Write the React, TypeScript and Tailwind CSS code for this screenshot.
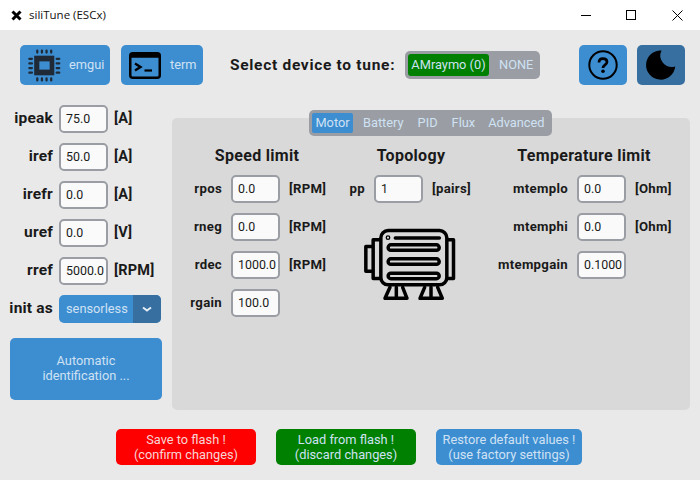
const font = { fontFamily: 'Roboto, sans-serif' };

function Input({ value }: { value: string }) {
  return (
    <div className="w-[49px] h-[28px] shrink-0 rounded-[5px] border-2 border-[#9a9da3] bg-[#fafafa] pl-[5px] flex items-center overflow-hidden text-[12.4px] text-[#1a1a1a] whitespace-nowrap">
      {value}
    </div>
  );
}

function SideField({ label, value, unit }: { label: string; value: string; unit: string }) {
  return (
    <div className="flex items-center h-[28px] mb-[10px]">
      <div className="w-[53px] text-right text-[15.5px] font-bold text-[#1a1a1a] tracking-[0.2px]">{label}</div>
      <div className="ml-[6px]"><Input value={value} /></div>
      <div className="ml-[6px] text-[14.5px] font-bold text-[#1a1a1a] tracking-[0.2px]">{unit}</div>
    </div>
  );
}

function Field({ label, value, unit, labelWidth }: { label: string; value: string; unit?: string; labelWidth: string }) {
  return (
    <div className="flex items-center h-[28px] mb-[10px]">
      <div className={`${labelWidth} shrink-0 text-right text-[13.2px] font-bold text-[#1a1a1a] tracking-[0.3px] whitespace-nowrap`}>{label}</div>
      <div className="ml-[9px]"><Input value={value} /></div>
      {unit && <div className="ml-[9px] text-[13.2px] font-bold text-[#1a1a1a] tracking-[0.3px] whitespace-nowrap">{unit}</div>}
    </div>
  );
}

function ChipIcon() {
  return (
    <svg width="33" height="33" viewBox="0 0 32 32" fill="none">
      <rect x="6" y="6.500" width="19.500" height="19" fill="#1f2a36" />
      <rect x="11" y="12" width="10" height="8" fill="#3d8dd1" />
      <g stroke="#1f2a36" strokeWidth="2.200" strokeLinecap="round">
        <path d="M9 1.500v2M13.500 1.500v2M18 1.500v2M22.500 1.500v2" />
        <path d="M9 28.500v2M13.500 28.500v2M18 28.500v2M22.500 28.500v2" />
        <path d="M1.300 9.500h2.500M1.300 14h2.500M1.300 18.500h2.500M1.300 23h2.500" />
        <path d="M27.800 9.500h2.500M27.800 14h2.500M27.800 18.500h2.500M27.800 23h2.500" />
      </g>
    </svg>
  );
}

function TermIcon() {
  return (
    <svg width="32" height="27" viewBox="0 0 32 27" fill="none">
      <rect x="1.250" y="1.250" width="29.500" height="24.500" rx="2.500" stroke="#000" strokeWidth="2.500" />
      <rect x="1.250" y="1.250" width="29.500" height="4.500" fill="#000" />
      <path d="M6 11.500l5.500 3.500-5.500 3.500" stroke="#000" strokeWidth="2.400" />
      <path d="M15.500 18.500h7.500" stroke="#000" strokeWidth="2.200" />
    </svg>
  );
}

function HelpIcon() {
  return (
    <svg width="32" height="32" viewBox="0 0 32 32" fill="none">
      <circle cx="16" cy="16" r="13.700" stroke="#000" strokeWidth="2" />
      <path d="M12 13.500c0-2.400 1.700-3.800 4-3.800 2.400 0 4 1.400 4 3.300 0 2.900-4 2.900-4 6" stroke="#000" strokeWidth="2.700" />
      <circle cx="16" cy="22.300" r="1.800" fill="#000" />
    </svg>
  );
}

function MoonIcon() {
  return (
    <svg width="32" height="32" viewBox="0 0 32 32">
      <path d="M16.500 1.500A14.600 14.600 0 1 0 30.200 17.500A11.500 11.500 0 0 1 16.500 1.500Z" fill="#000" />
    </svg>
  );
}

function MotorIcon() {
  return (
    <svg width="100" height="80" viewBox="0 0 300 240" fill="none" stroke="#000" strokeWidth="10.500" strokeLinejoin="round" strokeLinecap="round">
      <rect x="62.500" y="16.500" width="198" height="163" rx="22" />
      <path d="M58 44.500H39.500V160.500H58" />
      <path d="M35 64.500H17.500V138.500H35" />
      <path d="M265 44.500H280.500V160.500H265" />
      <rect x="84.500" y="59.500" width="153" height="16.500" rx="8" />
      <rect x="84.500" y="101.500" width="153" height="16.500" rx="8" />
      <rect x="84.500" y="144.500" width="153" height="16.500" rx="8" />
      <path d="M106 39H238" />
      <circle cx="84" cy="38" r="2" />
      <path d="M90 187L75 220H141L128 187M109 187V220" />
      <path d="M194 187L180 220H247L233 187M213 187V220" />
    </svg>
  );
}

export default function App() {
  return (
    <div className="w-[700px] h-[480px] bg-[#e9e9e9] overflow-hidden flex flex-col" style={font}>
      {/* title bar */}
      <div className="h-[30px] bg-white flex items-center shrink-0">
        <svg className="ml-[11px]" width="11" height="11" viewBox="0 0 11 11">
          <path d="M1.500 1.500l8 8M9.500 1.500l-8 8" stroke="#000" strokeWidth="3" />
        </svg>
        <div className="ml-[7px] text-[11.5px] text-[#111]" style={{ fontFamily: '"Open Sans", sans-serif' }}>siliTune (ESCx)</div>
        <div className="ml-auto flex items-center">
          <svg width="11" height="11" className="mr-[34px]" viewBox="0 0 11 11"><path d="M0 5.500h10" stroke="#000" /></svg>
          <svg width="11" height="11" className="mr-[35px]" viewBox="0 0 11 11"><rect x="0.500" y="0.500" width="9" height="9" fill="none" stroke="#000" /></svg>
          <svg width="11" height="11" className="mr-[17px]" viewBox="0 0 11 11"><path d="M0.500 0.500l10 10M10.500 0.500l-10 10" stroke="#000" /></svg>
        </div>
      </div>

      {/* top toolbar */}
      <div className="h-[40px] mt-[15px] ml-[20px] flex items-center shrink-0">
        <div className="w-[90px] h-[40px] bg-[#3d8dd1] rounded-[5px] flex items-center pl-[8px] text-[12.8px] text-[#cfe2f3]">
          <ChipIcon />
          <span className="ml-[8px]">emgui</span>
        </div>
        <div className="w-[82px] h-[40px] ml-[11px] bg-[#3d8dd1] rounded-[5px] flex items-center pl-[8px] text-[12.8px] text-[#cfe2f3]">
          <TermIcon />
          <span className="ml-[9px]">term</span>
        </div>
        <div className="ml-[27px] w-[175px] pt-[2px] text-[15.5px] font-bold text-[#1a1a1a] tracking-[0.7px] whitespace-nowrap">Select device to tune:</div>
        <div className="w-[135px] h-[28px] bg-[#9a9da3] rounded-[5px] flex items-center pl-[3px] text-[12.8px] text-[#cfe2f3]">
          <div className="w-[81px] h-[22px] bg-[#008000] rounded-[3px] flex items-center justify-center">AMraymo (0)</div>
          <div className="ml-[10px]">NONE</div>
        </div>
        <div className="ml-[39px] w-[48px] h-[40px] bg-[#3d8dd1] rounded-[5px] flex items-center justify-center"><HelpIcon /></div>
        <div className="ml-[10px] w-[48px] h-[40px] bg-[#376fa0] rounded-[5px] flex items-center justify-center"><MoonIcon /></div>
      </div>

      <div className="flex mt-[20px] items-start">
        {/* left column */}
        <div className="w-[172px] shrink-0 flex flex-col">
          <SideField label="ipeak" value="75.0" unit="[A]" />
          <SideField label="iref" value="50.0" unit="[A]" />
          <SideField label="irefr" value="0.0" unit="[A]" />
          <SideField label="uref" value="0.0" unit="[V]" />
          <SideField label="rref" value="5000.0" unit="[RPM]" />
          <div className="flex items-center h-[28px]">
            <div className="w-[53px] text-right text-[15.5px] font-bold text-[#1a1a1a] tracking-[0.2px] whitespace-nowrap">init as</div>
            <div className="ml-[6px] w-[102px] h-[28px] rounded-[5px] bg-[#3d8dd1] flex overflow-hidden text-[12.8px] text-[#cfe2f3]">
              <div className="flex-1 flex items-center pl-[7px] pb-[1px]">sensorless</div>
              <div className="w-[28px] bg-[#376fa0] flex items-center justify-center">
                <svg width="10" height="7" viewBox="0 0 10 7" fill="none"><path d="M1 1.500l4 3 4-3" stroke="#e6eef6" strokeWidth="2" /></svg>
              </div>
            </div>
          </div>
          <div className="ml-[10px] mt-[15px] pb-[2px] w-[152px] h-[62px] rounded-[5px] bg-[#3d8dd1] flex items-center justify-center text-center text-[12.8px] leading-[15px] text-[#cfe2f3]">
            <div>Automatic<br />identification ...</div>
          </div>
        </div>

        {/* main panel */}
        <div className="relative mt-[13px] w-[518px] h-[292px] bg-[#d9d9d9] rounded-[5px]">
          <div className="absolute left-[137px] top-[-8px] w-[243px] h-[26px] bg-[#9a9da3] rounded-[5px] flex items-center pl-[3px] text-[12.8px] text-[#cfe2f3]">
            <div className="w-[41px] h-[20px] bg-[#3d8dd1] rounded-[2px] flex items-center justify-center">Motor</div>
            <div className="ml-[10px]">Battery</div>
            <div className="ml-[14px]">PID</div>
            <div className="ml-[14px]">Flux</div>
            <div className="ml-[13px]">Advanced</div>
          </div>

          <div className="flex pt-[26px]">
            <div className="w-[170px] shrink-0">
              <div className="h-[31px] text-center text-[16px] font-bold text-[#1a1a1a] tracking-[0.3px]">Speed limit</div>
              <Field labelWidth="w-[50px]" label="rpos" value="0.0" unit="[RPM]" />
              <Field labelWidth="w-[50px]" label="rneg" value="0.0" unit="[RPM]" />
              <Field labelWidth="w-[50px]" label="rdec" value="1000.0" unit="[RPM]" />
              <Field labelWidth="w-[50px]" label="rgain" value="100.0" />
            </div>
            <div className="w-[138px] shrink-0">
              <div className="h-[31px] text-center text-[16px] font-bold text-[#1a1a1a] tracking-[0.3px]">Topology</div>
              <Field labelWidth="w-[23px]" label="pp" value="1" unit="[pairs]" />
              <div className="ml-[18px] mt-[22px]"><MotorIcon /></div>
            </div>
            <div className="w-[208px] shrink-0">
              <div className="h-[31px] text-center text-[16px] font-bold text-[#1a1a1a] tracking-[0.3px]">Temperature limit</div>
              <Field labelWidth="w-[88px]" label="mtemplo" value="0.0" unit="[Ohm]" />
              <Field labelWidth="w-[88px]" label="mtemphi" value="0.0" unit="[Ohm]" />
              <Field labelWidth="w-[88px]" label="mtempgain" value="0.1000" />
            </div>
          </div>
        </div>
      </div>

      {/* bottom buttons */}
      <div className="mt-[19px] ml-[116px] flex text-center text-[12.8px] leading-[15px] text-[#cfe2f3]">
        <div className="w-[140px] h-[36px] bg-[#ff0000] rounded-[5px] flex items-center justify-center text-[#f6d5d5]">
          <div>Save to flash !<br />(confirm changes)</div>
        </div>
        <div className="ml-[20px] w-[140px] h-[36px] bg-[#008000] rounded-[5px] flex items-center justify-center">
          <div>Load from flash !<br />(discard changes)</div>
        </div>
        <div className="ml-[20px] w-[146px] h-[36px] bg-[#3d8dd1] rounded-[5px] flex items-center justify-center">
          <div>Restore default values !<br />(use factory settings)</div>
        </div>
      </div>
    </div>
  );
}
